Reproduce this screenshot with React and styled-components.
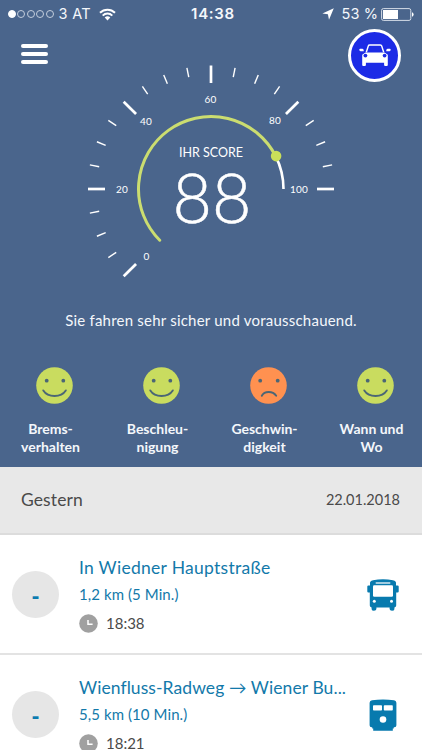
import React from 'react'
import styled, { createGlobalStyle } from 'styled-components'

const GlobalStyle = createGlobalStyle`
*{ box-sizing:border-box; }
html, body{
margin:0;
overflow:hidden;
}
body{
font-family:Lato, 'Noto Sans', sans-serif;
background-color:#fff;
}
`
const Screen = styled.div`
width:422px;
height:750px;
overflow:hidden;
background-color:#fff;
`
const Hero = styled.section`
height:467px;
background-color:#4a658c;
color:#f4f7fb;
display:flex;
flex-direction:column;
`
const StatusBar = styled.div`
height:28px;
flex:none;
padding:0 8px;
display:grid;
grid-template-columns:1fr auto 1fr;
align-items:center;
font-family:Inter, sans-serif;
font-size:14.5px;
line-height:28px;
`
const StatusSide = styled.div`
display:flex;
align-items:center;
justify-content:${p => p.$end ? 'flex-end' : 'flex-start'};
`
const Label = styled.span`
letter-spacing:${p => p.$spacing || 0}px;
margin-left:${p => p.$left || 0}px;
white-space:nowrap;
`
const IconSlot = styled.span`
display:flex;
margin-left:${p => p.$left || 0}px;
`
const Clock = styled.span`
font-weight:600;
font-size:15px;
letter-spacing:0.7px;
margin-left:4px;
`
const Dots = styled.div`
display:flex;
gap:1.4px;
`
const Dot = styled.span`
width:8px;
height:8px;
border-radius:50%;
border:1px solid #c3cedd;
background-color:${p => p.$filled ? '#fff' : 'transparent'};
${p => p.$filled && 'border-color:#fff;'}
`
const TopBar = styled.div`
height:54px;
flex:none;
padding:0 21px;
display:flex;
align-items:center;
justify-content:space-between;
`
const MenuButton = styled.button`
width:27px;
padding:0;
border:none;
background:none;
display:flex;
flex-direction:column;
gap:4px;
margin-top:-2px;
`
const MenuLine = styled.span`
height:4px;
border-radius:2px;
background-color:#fff;
`
const Mode = styled.div`
width:53px;
height:53px;
border-radius:50%;
border:3px solid #fff;
background-color:#1c2be6;
display:flex;
align-items:center;
justify-content:center;
`
const GaugeBox = styled.div`
height:220px;
flex:none;
margin-top:-22px;
display:flex;
justify-content:center;
pointer-events:none;
`
const Verdict = styled.p`
margin:28px 0 0;
text-align:center;
font-size:15px;
line-height:24px;
letter-spacing:0.22px;
`
const Ratings = styled.div`
margin-top:35px;
display:grid;
grid-template-columns:repeat(4, 107px);
justify-content:center;
`
const Rating = styled.div`
display:flex;
flex-direction:column;
align-items:center;
`
const FaceBox = styled.div`
height:37px;
padding-left:8px;
`
const RatingName = styled.div`
margin-top:16px;
font-size:14px;
font-weight:700;
line-height:18px;
text-align:center;
white-space:pre-line;
`
const DayBar = styled.div`
height:68px;
padding:0 22px 2px 21px;
background-color:#e8e8e8;
border-bottom:2px solid #dcdcdc;
display:flex;
align-items:center;
justify-content:space-between;
color:#4a4a4a;
`
const Day = styled.span`
font-size:17.5px;
letter-spacing:0.1px;
`
const DayDate = styled.span`
font-size:14.5px;
`
const Trip = styled.article`
height:120px;
padding:1px 22px 0 12px;
border-bottom:2px solid #e3e3e3;
display:flex;
align-items:center;
`
const TripScore = styled.div`
width:47px;
height:47px;
flex:none;
border-radius:50%;
background-color:#e6e6e6;
display:flex;
align-items:center;
justify-content:center;
color:#0b7bb0;
font-family:'Noto Sans', sans-serif;
font-size:22px;
font-weight:700;
line-height:47px;
`
const TripInfo = styled.div`
flex:1;
margin-left:20px;
padding-top:5px;
color:#1279aa;
`
const Place = styled.div`
font-size:17.5px;
letter-spacing:${p => p.$long ? 0.08 : 0.28}px;
line-height:26px;
white-space:nowrap;
`
const Distance = styled.div`
font-size:15px;
letter-spacing:0.08px;
line-height:27px;
white-space:nowrap;
`
const Time = styled.div`
display:flex;
align-items:center;
gap:8px;
font-size:15px;
line-height:31px;
color:#4a4a4a;
`
const Vehicle = styled.div`
display:flex;
width:34px;
justify-content:center;
`

const CX = 123
const CY = 124
const R = 72.5

// 20 points on the scale span 45 degrees, 0 sits at the lower left
const point = (value, radius) => {
    const a = (225 - value * 2.25) * Math.PI / 180
    return [CX + radius * Math.cos(a), CY - radius * Math.sin(a)]
}

const arc = (from, to) => {
    const [x1, y1] = point(from, R)
    const [x2, y2] = point(to, R)
    const large = (to - from) * 2.25 > 180 ? 1 : 0
    return `M${x1} ${y1}A${R} ${R} 0 ${large} 1 ${x2} ${y2}`
}

const scale = [
    { value: 0, x: 58.5, y: 194.5 },
    { value: 20, x: 34, y: 127.5 },
    { value: 40, x: 58, y: 59.5 },
    { value: 60, x: 122.5, y: 37.5 },
    { value: 80, x: 187, y: 58.5 },
    { value: 100, x: 211, y: 127.5 },
]

const GaugeText = styled.text`
fill:#fff;
text-anchor:middle;
font-size:${p => p.$size}px;
letter-spacing:${p => p.$spacing || 0}px;
`
const ScoreText = styled(GaugeText)`
font-weight:300;
stroke:#fff;
stroke-width:0.5px;
`

function Gauge({ score }) {
    const ticks = Array.from({ length: 21 }, (_, i) => i * 5)
    const [dotX, dotY] = point(score, R)
    return (
        <svg width="246" height="220" viewBox="0 -5 246 220">
            {ticks.map(t => {
                const major = t % 20 === 0
                const [x1, y1] = point(t, major ? 106 : 114)
                const [x2, y2] = point(t, 123.5)
                return <line key={t} x1={x1} y1={y1} x2={x2} y2={y2} stroke="#fff" strokeWidth={major ? 2.7 : 1.4} />
            })}
            <path d={arc(score, 100)} fill="none" stroke="#fff" strokeWidth="2.6" />
            <path d={arc(0, score)} fill="none" stroke="#cbdd70" strokeWidth="3" strokeLinecap="round" />
            <circle cx={dotX + 0.5} cy={dotY} r="5.3" fill="#c9df59" />
            {scale.map(s => <GaugeText key={s.value} x={s.x} y={s.y} $size={10} $spacing={0.2}>{s.value}</GaugeText>)}
            <GaugeText x={CX} y={92} $size={12.5}>IHR SCORE</GaugeText>
            <ScoreText x={CX + 1} y={158} $size={68}>{score}</ScoreText>
        </svg>
    )
}

function Face({ sad }) {
    return (
        <svg width="37" height="37" viewBox="0 0 37 37">
            <circle cx="18.5" cy="18.5" r="18.3" fill={sad ? '#ff9150' : '#c9dc5f'} />
            <circle cx={sad ? 10.2 : 10.7} cy="13.7" r="1.9" fill="#4b6675" />
            <circle cx={sad ? 27.7 : 27.3} cy="13.7" r="1.9" fill="#4b6675" />
            <path
                d={sad ? 'M11.8 28.8Q13.8 25 18.7 25T26.2 28.8' : 'M7.3 23.4C12 30.8 25 30.8 29.8 23.4'}
                fill="none" stroke="#4b6675" strokeWidth="1.9" strokeLinecap="round" />
        </svg>
    )
}

function Wifi() {
    return (
        <svg width="17" height="13" viewBox="0 0 17 13">
            <g fill="none" stroke="#fff" strokeWidth="2">
                <path d="M1 4.8a10.6 10.6 0 0 1 15 0" />
                <path d="M3.7 7.6a6.8 6.8 0 0 1 9.6 0" />
            </g>
            <path d="M5.7 9.6a4 4 0 0 1 5.6 0L8.5 12.5Z" fill="#fff" />
        </svg>
    )
}

function Battery() {
    return (
        <svg width="33" height="13" viewBox="0 0 33 13">
            <rect x="0.6" y="0.6" width="29.2" height="11.8" rx="1.8" fill="none" stroke="#d5dde8" />
            <rect x="2" y="2" width="15" height="9" fill="#fff" />
            <path d="M31 4.2q1.6.4 1.6 2.3t-1.6 2.3z" fill="#fff" />
        </svg>
    )
}

function Car() {
    return (
        <svg width="32" height="22" viewBox="0 0 32 22">
            <path d="M7.3 8.3L9.3 2Q9.6 1 10.6 1H21.4Q22.4 1 22.7 2L24.7 8.3" fill="none" stroke="#fff" strokeWidth="1.4" />
            <path d="M6.5 8.6H25.5L28.8 10.8V21Q28.8 22 27.8 22H26.2Q25.1 22 25.1 21V18.8H6.9V21Q6.9 22 5.8 22H4.2Q3.2 22 3.2 21V10.8Z" fill="#fff" />
            <path d="M.3 5.5Q.3 4.7 1.2 4.7H3.5Q5 5 4.8 7.2H1.5Q.3 7 .3 5.5ZM31.7 5.5Q31.7 4.7 30.8 4.7H28.5Q27 5 27.2 7.2H30.5Q31.7 7 31.7 5.5Z" fill="#fff" />
            <circle cx="6.4" cy="11.6" r="1.9" fill="#1c2be6" />
            <circle cx="25.6" cy="11.6" r="1.9" fill="#1c2be6" />
        </svg>
    )
}

function ClockIcon() {
    return (
        <svg width="19" height="19" viewBox="0 0 19 19">
            <circle cx="9.5" cy="9.5" r="9.3" fill="#a0a0a0" />
            <path d="M9 6V10.2H13.6" fill="none" stroke="#fff" strokeWidth="1.5" />
        </svg>
    )
}

function Bus() {
    return (
        <svg width="32" height="32" viewBox="0 0 32 32">
            <path d="M3 3.5Q3.4 1.8 6 1.3Q16 -.6 26 1.3Q28.6 1.8 29 3.5V6.5H30.6Q31.7 6.5 31.7 7.6V12.4Q31.7 13.5 30.6 13.5H29.2V26.5Q29.2 28.2 27.4 28.4V30.2Q27.2 31.8 25 31.8T22.6 30V28.6H9.4V30Q9.2 31.8 7 31.8T4.6 30.2V28.4Q2.8 28.2 2.8 26.5V13.5H1.4Q.3 13.5 .3 12.4V7.6Q.3 6.5 1.4 6.5H3Z" fill="#087aae" />
            <rect x="8.5" y="3.3" width="15" height="1.5" rx=".7" fill="#d3e8f1" />
            <rect x="6" y="6.3" width="20" height="11.5" rx="1.2" fill="#fff" />
            <circle cx="7.3" cy="22.3" r="1.5" fill="#fff" />
            <circle cx="24.5" cy="22.3" r="1.5" fill="#fff" />
        </svg>
    )
}

function Train() {
    return (
        <svg width="28" height="32" viewBox="0 0 28 32">
            <path d="M.6 3.8Q.8 1.6 3 1.2Q14 -.4 25 1.2Q27.2 1.6 27.4 3.8V26.3Q27.4 28.3 25.4 28.3H24.8V29.6H23.8V31.7H4.2V29.6H3.2V28.3H2.6Q.6 28.3 .6 26.3Z" fill="#087aae" />
            <rect x="4" y="6.2" width="9" height="5.4" rx=".8" fill="#fff" />
            <rect x="14.8" y="6.2" width="9" height="5.4" rx=".8" fill="#fff" />
            <circle cx="14" cy="20.5" r="3.3" fill="#fff" />
        </svg>
    )
}

const ratings = [
    { name: 'Brems-\nverhalten' },
    { name: 'Beschleu-\nnigung' },
    { name: 'Geschwin-\ndigkeit', sad: true },
    { name: 'Wann und\nWo' },
]

const trips = [
    { place: 'In Wiedner Hauptstraße', distance: '1,2 km (5 Min.)', time: '18:38', icon: <Bus /> },
    { place: 'Wienfluss-Radweg → Wiener Bu...', distance: '5,5 km (10 Min.)', time: '18:21', icon: <Train /> },
]

export default function App() {
    return (
        <Screen>
            <GlobalStyle />
            <Hero>
                <StatusBar>
                    <StatusSide>
                        <Dots>
                            {[0, 1, 2, 3, 4].map(i => <Dot key={i} $filled={i === 0} />)}
                        </Dots>
                        <Label $left={5} $spacing={0.3}>3 AT</Label>
                        <IconSlot $left={8}><Wifi /></IconSlot>
                    </StatusSide>
                    <Clock>14:38</Clock>
                    <StatusSide $end>
                        <svg width="12" height="12" viewBox="0 0 12 12"><path d="M11.8.3L7 11.7L5.9 6.3L.4 5.5Z" fill="#fff" /></svg>
                        <Label $left={8} $spacing={0.1}>53 %</Label>
                        <IconSlot $left={3}><Battery /></IconSlot>
                    </StatusSide>
                </StatusBar>
                <TopBar>
                    <MenuButton aria-label="Menu"><MenuLine /><MenuLine /><MenuLine /></MenuButton>
                    <Mode><Car /></Mode>
                </TopBar>
                <GaugeBox><Gauge score={88} /></GaugeBox>
                <Verdict>Sie fahren sehr sicher und vorausschauend.</Verdict>
                <Ratings>
                    {ratings.map(r => (
                        <Rating key={r.name}>
                            <FaceBox><Face sad={r.sad} /></FaceBox>
                            <RatingName>{r.name}</RatingName>
                        </Rating>
                    ))}
                </Ratings>
            </Hero>
            <DayBar>
                <Day>Gestern</Day>
                <DayDate>22.01.2018</DayDate>
            </DayBar>
            {trips.map(t => (
                <Trip key={t.time}>
                    <TripScore>-</TripScore>
                    <TripInfo>
                        <Place $long={t.place.length > 25}>{t.place}</Place>
                        <Distance>{t.distance}</Distance>
                        <Time><ClockIcon />{t.time}</Time>
                    </TripInfo>
                    <Vehicle>{t.icon}</Vehicle>
                </Trip>
            ))}
        </Screen>
    )
}
